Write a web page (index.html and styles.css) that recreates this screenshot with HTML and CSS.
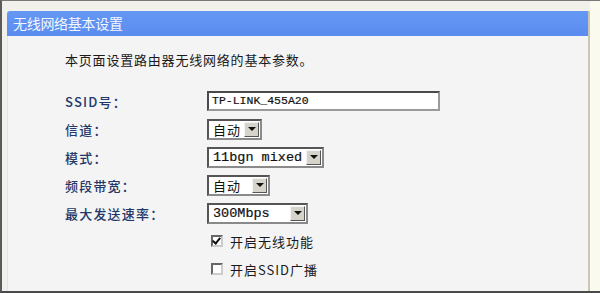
FILE: index.html
```html
<!DOCTYPE html>
<html lang="zh">
<head>
<meta charset="utf-8">
<link rel="stylesheet" href="styles.css">
</head>
<body>
<div class="frame">
  <div class="panel">
    <div class="title">无线网络基本设置</div>
    <div class="content">
      <p class="intro">本页面设置路由器无线网络的基本参数。</p>
      <div class="form">
        <div class="label">SSID号：</div>
        <div class="field"><div class="textbox">TP-LINK_455A20</div></div>
        <div class="label">信道：</div>
        <div class="field"><div class="select w55"><span class="val cjk">自动</span><span class="arrow"></span></div></div>
        <div class="label">模式：</div>
        <div class="field"><div class="select w117"><span class="val">11bgn mixed</span><span class="arrow"></span></div></div>
        <div class="label">频段带宽：</div>
        <div class="field"><div class="select w63"><span class="val cjk">自动</span><span class="arrow"></span></div></div>
        <div class="label">最大发送速率：</div>
        <div class="field"><div class="select w101"><span class="val">300Mbps</span><span class="arrow"></span></div></div>
        <div class="label"></div>
        <div class="field check"><span class="box checked"></span><span class="ctext">开启无线功能</span></div>
        <div class="label"></div>
        <div class="field check"><span class="box"></span><span class="ctext">开启SSID广播</span></div>
      </div>
    </div>
  </div>
  <div class="side"></div>
</div>
</body>
</html>
```
FILE: styles.css
```css
html, body {
  margin: 0;
  padding: 0;
  width: 600px;
  height: 293px;
  overflow: hidden;
  background: #f1f0ea;
}
.frame {
  box-sizing: border-box;
  width: 600px;
  height: 293px;
  border-left: 2px solid #5a5a5a;
  border-top: 1px solid #777;
  border-bottom: 2px solid #4a4a4a;
  display: flex;
  padding: 10px 0 0 5px;
  font-family: "Noto Sans CJK SC", sans-serif;
}
.panel {
  width: 581px;
  display: flex;
  flex-direction: column;
  border-right: 2px solid #c9c6b6;
}
.side {
  flex: 1;
  background: #fbfaef;
  margin-top: -10px;
}
.title {
  height: 25px;
  background: linear-gradient(#6598f4, #5a8cf0);
  border-radius: 3px 0 0 0;
  color: #f4f7ff;
  font-size: 14px;
  line-height: 25px;
  padding-left: 6px;
  letter-spacing: -0.3px;
}
.content {
  flex: 1;
  background: #f4f4f4;
  border-left: 1px solid #e4e4e4;
  padding: 14px 0 0 57px;
}
.intro {
  margin: 0;
  font-size: 13px;
  line-height: 20px;
  color: #1a1a1a;
  letter-spacing: 0.8px;
}
.form {
  margin-top: 17px;
  display: grid;
  grid-template-columns: 142px 1fr;
  grid-auto-rows: 28px;
  align-items: center;
}
.label {
  font-size: 13px;
  font-weight: 500;
  color: #22386a;
  letter-spacing: 1.2px;
}
.field {
  display: flex;
  align-items: center;
}
.textbox {
  box-sizing: border-box;
  width: 233px;
  height: 20px;
  border: 2px solid;
  border-color: #4a4a4a #9a9a9a #9a9a9a #4a4a4a;
  background: #fff;
  font-family: "Liberation Mono", monospace;
  font-size: 11.5px;
  color: #111;
  -webkit-text-stroke: 0.2px #111;
  line-height: 16px;
  padding-left: 3px;
}
.select {
  box-sizing: border-box;
  height: 21px;
  border: 2px solid;
  border-color: #555 #8a8a8a #8a8a8a #555;
  background: #fff;
  display: flex;
  align-items: center;
  justify-content: space-between;
  padding-right: 1px;
}
.w55 { width: 55px; }
.w117 { width: 117px; }
.w63 { width: 63px; }
.w101 { width: 101px; }
.val {
  font-family: "Liberation Mono", monospace;
  font-size: 13.5px;
  color: #111;
  -webkit-text-stroke: 0.2px #111;
  padding-left: 4px;
}
.val.cjk {
  font-family: "Noto Sans CJK SC", sans-serif;
  -webkit-text-stroke: 0;
  font-size: 13px;
  letter-spacing: 1px;
}
.arrow {
  box-sizing: border-box;
  width: 15px;
  height: 15px;
  background: #d6d3cb;
  border: 1px solid;
  border-color: #f4f4f4 #555 #555 #f4f4f4;
  display: flex;
  align-items: center;
  justify-content: center;
}
.arrow::after {
  content: "";
  border-left: 4px solid transparent;
  border-right: 4px solid transparent;
  border-top: 4px solid #111;
}
.check {
  padding-left: 4px;
}
.box {
  box-sizing: border-box;
  width: 12px;
  height: 12px;
  border: 2px solid;
  border-color: #666 #ccc #ccc #666;
  background: #fff;
  margin-right: 7px;
  position: relative;
}
.box.checked::after {
  content: "";
  position: absolute;
  left: 1px;
  top: -1px;
  width: 3px;
  height: 6px;
  border-right: 2px solid #111;
  border-bottom: 2px solid #111;
  transform: rotate(40deg);
}
.ctext {
  font-size: 13px;
  color: #1a1a1a;
  letter-spacing: 1px;
}
```
